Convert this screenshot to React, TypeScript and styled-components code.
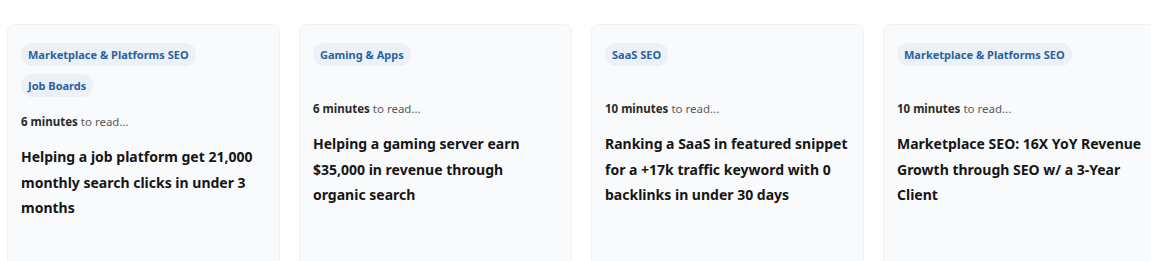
import React from "react";
import styled, { createGlobalStyle } from "styled-components";

const GlobalStyle = createGlobalStyle`
  html, body {
    margin: 0;
    padding: 0;
    background: #ffffff;
    overflow: hidden;
  }
  body {
    font-family: "Noto Sans", "Open Sans", "Liberation Sans", sans-serif;
  }
`;

const Viewport = styled.div`
  width: 1151px;
  height: 261px;
  overflow: hidden;
`;

const Row = styled.div`
  display: flex;
  gap: 19px;
  padding: 24px 0 0 7px;
  width: max-content;
`;

const Card = styled.article`
  flex: 0 0 273px;
  box-sizing: border-box;
  height: 280px;
  background: #f8fafc;
  border: 1px solid #eff2f5;
  border-radius: 8px;
  padding: 18px 13px 0 13px;
`;

const TagList = styled.div`
  display: flex;
  flex-wrap: wrap;
  align-content: flex-start;
  gap: 8px;
  min-height: 41px;
  margin-bottom: 16px;
`;

const Tag = styled.span`
  display: inline-flex;
  align-items: center;
  height: 23px;
  padding: 0 7px;
  border-radius: 12px;
  background: #ebf1f7;
  color: #2a62a0;
  font-size: 11px;
  font-weight: 700;
`;

const Meta = styled.p`
  margin: 0 0 13px;
  font-size: 11.5px;
  line-height: 18px;
  color: #5a5a5a;

  b {
    color: #2a2a2a;
    font-weight: 700;
  }
`;

const Title = styled.h3`
  margin: 0;
  font-size: 14px;
  line-height: 25.5px;
  font-weight: 700;
  color: #161616;
`;

type Post = { tags: string[]; minutes: number; title: string };

const posts: Post[] = [
  {
    tags: ["Marketplace & Platforms SEO", "Job Boards"],
    minutes: 6,
    title: "Helping a job platform get 21,000 monthly search clicks in under 3 months",
  },
  {
    tags: ["Gaming & Apps"],
    minutes: 6,
    title: "Helping a gaming server earn $35,000 in revenue through organic search",
  },
  {
    tags: ["SaaS SEO"],
    minutes: 10,
    title: "Ranking a SaaS in featured snippet for a +17k traffic keyword with 0 backlinks in under 30 days",
  },
  {
    tags: ["Marketplace & Platforms SEO"],
    minutes: 10,
    title: "Marketplace SEO: 16X YoY Revenue Growth through SEO w/ a 3-Year Client",
  },
];

export default function App() {
  return (
    <>
      <GlobalStyle />
      <Viewport>
        <Row>
          {posts.map((p, i) => (
            <Card key={i}>
              <TagList>
                {p.tags.map((t) => (
                  <Tag key={t}>{t}</Tag>
                ))}
              </TagList>
              <Meta>
                <b>{p.minutes} minutes</b> to read...
              </Meta>
              <Title>{p.title}</Title>
            </Card>
          ))}
        </Row>
      </Viewport>
    </>
  );
}
